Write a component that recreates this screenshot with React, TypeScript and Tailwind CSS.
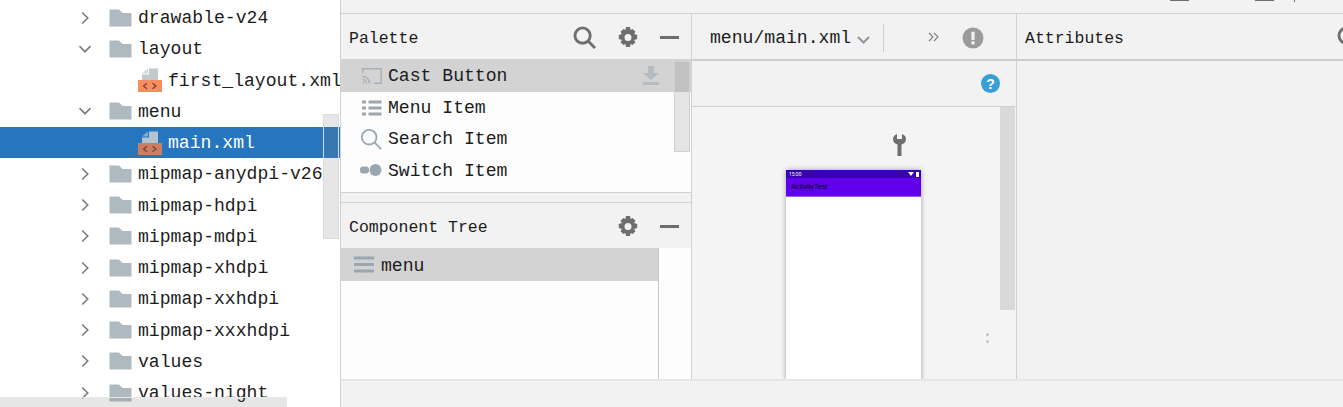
import type { ReactNode } from "react";

type TreeRow = {
  label: string;
  kind: "closed" | "open" | "file";
  selected?: boolean;
};

const treeRows: TreeRow[] = [
  { label: "drawable-v24", kind: "closed" },
  { label: "layout", kind: "open" },
  { label: "first_layout.xml", kind: "file" },
  { label: "menu", kind: "open" },
  { label: "main.xml", kind: "file", selected: true },
  { label: "mipmap-anydpi-v26", kind: "closed" },
  { label: "mipmap-hdpi", kind: "closed" },
  { label: "mipmap-mdpi", kind: "closed" },
  { label: "mipmap-xhdpi", kind: "closed" },
  { label: "mipmap-xxhdpi", kind: "closed" },
  { label: "mipmap-xxxhdpi", kind: "closed" },
  { label: "values", kind: "closed" },
  { label: "values-night", kind: "closed" },
];

function Chevron({ open }: { open: boolean }) {
  return (
    <svg width="14" height="14" viewBox="0 0 14 14" fill="none" stroke="#7f7f7f" strokeWidth="1.7">
      {open ? <path d="M1.5 4.2 7 9.7l5.5-5.5" /> : <path d="M4.2 1.5 9.7 7l-5.5 5.5" />}
    </svg>
  );
}

function Folder() {
  return (
    <svg width="23" height="18" viewBox="0 0 23 18" fill="#aeb9c0">
      <path d="M0.5 0.5h9.5l3.5 3.5h9v13.5h-22z" />
    </svg>
  );
}

function XmlFile({ selected }: { selected?: boolean }) {
  const grey = selected ? "#b4c3d2" : "#c2c8cc";
  return (
    <svg width="24" height="24" viewBox="0 0 24 24">
      <path d="M11 0.500h9v11.500H4V6.500h7z" fill={grey} />
      <path d="M4 5.500 10 0.500v5z" fill={grey} opacity="0.7" />
      <rect x="0" y="12" width="24" height="12" fill={selected ? "#cc7d62" : "#f78d5f"} />
      <path d="M9 15.200 5.500 18 9 20.800M14.500 15.200 18 18l-3.500 2.800" fill="none" stroke="#6d4437" strokeWidth="1.200" />
    </svg>
  );
}

function SearchIcon({ size = 23, color = "#6e6e6e", width = 3 }: { size?: number; color?: string; width?: number }) {
  return (
    <svg width={size} height={size} viewBox="0 0 24 24" fill="none" stroke={color} strokeWidth={width}>
      <circle cx="10" cy="10" r="8" />
      <path d="m15.5 15.5 7.5 7.5" />
    </svg>
  );
}

function GearIcon() {
  return (
    <svg width="20" height="21" viewBox="0 0 20 21" fill="#6e6e6e" fillRule="evenodd">
      <path d="M8 0h4l.6 3 2-.9 2.9 2.6-1.4 2.3 3.1.9v4.200l-3.100.9 1.400 2.300-2.900 2.600-2-.9-.6 3H8l-.6-3-2 .9-2.900-2.600 1.400-2.300L.8 12.100V7.900l3.100-.9-1.400-2.300 2.900-2.600 2 .9z M10 7a3.500 3.500 0 1 0 0 7 3.500 3.500 0 0 0 0-7z" />
    </svg>
  );
}

function Minus() {
  return <span className="block h-[3px] w-[19px] bg-[#6e6e6e]" />;
}

function CastIcon() {
  return (
    <svg width="20" height="16" viewBox="0 0 20 16" fill="none" stroke="#a6b1ba" strokeWidth="1.5">
      <path d="M0.8 5V0.8h18.400v14.400H12" />
      <path d="M0.500 8.500a7 7 0 0 1 7 7M0.500 11.500a4 4 0 0 1 4 4" />
      <circle cx="1.500" cy="14.500" r="1" fill="#a6b1ba" stroke="none" />
    </svg>
  );
}

function ListIcon() {
  return (
    <svg width="20" height="16" viewBox="0 0 20 16" fill="#9aa7b0">
      <rect x="0" y="0.500" width="4" height="3" />
      <rect x="6.500" y="0.500" width="13" height="3" />
      <rect x="0" y="6.500" width="4" height="3" />
      <rect x="6.500" y="6.500" width="13" height="3" />
      <rect x="0" y="12.500" width="4" height="3" />
      <rect x="6.500" y="12.500" width="13" height="3" />
    </svg>
  );
}

function SwitchIcon() {
  return (
    <svg width="22" height="14" viewBox="0 0 22 14" fill="#9aa7b0">
      <rect x="0" y="3.500" width="9" height="7" rx="3" />
      <circle cx="15.500" cy="7" r="6" />
    </svg>
  );
}

function PanelHeader({ title, children }: { title: string; children?: ReactNode }) {
  return (
    <div className="flex h-[45px] shrink-0 items-center justify-between bg-[#f2f2f2] pl-2 pt-[2px] text-[16.5px] text-[#1c1c1c]">
      <span className="pt-[3px]">{title}</span>
      {children}
    </div>
  );
}

function PaletteRow({ icon, label, selected }: { icon: ReactNode; label: string; selected?: boolean }) {
  return (
    <div className={`flex items-center text-[18.100px] text-[#1c1c1c] ${selected ? "h-[33px] bg-[#d3d3d3]" : "h-[31.300px]"}`}>
      <span className="flex w-[47px] shrink-0 items-center justify-end pr-[6px]">{icon}</span>
      <span className="pt-[2px]">{label}</span>
    </div>
  );
}

function ProjectTree() {
  return (
    <div className="relative h-[407px] w-[340px] shrink-0 overflow-hidden bg-white pt-[2px] text-[18.100px] text-[#1c1c1c]">
      {treeRows.map((row) => (
        <div
          key={row.label}
          className={`flex h-[31.250px] items-center whitespace-nowrap ${row.selected ? "bg-[#2675bf] text-white" : ""}`}
        >
          {row.kind === "file" ? (
            <span className="flex items-center gap-[6px] pl-[138px]">
              <XmlFile selected={row.selected} />
              <span className="pt-[2px]">{row.label}</span>
            </span>
          ) : (
            <span className="flex items-center pl-[78px]">
              <Chevron open={row.kind === "open"} />
              <span className="ml-[17px] mr-[6px]">
                <Folder />
              </span>
              <span className="pt-[2px]">{row.label}</span>
            </span>
          )}
        </div>
      ))}
      <div className="absolute left-[323px] top-[114px] h-[125px] w-[16px] border border-[#dcdcdc] bg-[#828282]/20" />
      <div className="absolute bottom-0 left-0 h-[10px] w-[287px] border-r border-t border-[#e8e8e8] bg-[#828282]/20" />
    </div>
  );
}

function PalettePanel() {
  return (
    <div className="flex w-[351px] shrink-0 flex-col border-r border-[#d1d1d1]">
      <PanelHeader title="Palette">
        <span className="flex items-center pr-[12px]">
          <SearchIcon />
          <span className="ml-[22px] mr-[22px]">
            <GearIcon />
          </span>
          <Minus />
        </span>
      </PanelHeader>
      <div className="relative h-[134px] shrink-0 border-b border-[#d1d1d1] bg-[#fdfdfd]">
        <PaletteRow icon={<CastIcon />} label="Cast Button" selected />
        <PaletteRow icon={<ListIcon />} label="Menu Item" />
        <PaletteRow icon={<SearchIcon size={22} color="#9aa7b0" width={2} />} label="Search Item" />
        <PaletteRow icon={<SwitchIcon />} label="Switch Item" />
        <svg className="absolute left-[301px] top-[7px]" width="18" height="20" viewBox="0 0 18 20" fill="#b4bcc2">
          <path d="M6 0h6v7h5l-8 7-8-7h5zM1 16h16v3H1z" />
        </svg>
        <div className="absolute left-[333px] top-[2px] h-[91px] w-[16px] border border-[#d0d0d0] bg-[#828282]/20" />
      </div>
      <div className="h-[10px] shrink-0 border-b border-[#d1d1d1] bg-[#f2f2f2]" />
      <PanelHeader title="Component Tree">
        <span className="flex items-center pr-[12px]">
          <span className="mr-[22px]">
            <GearIcon />
          </span>
          <Minus />
        </span>
      </PanelHeader>
      <div className="flex min-h-0 flex-1 bg-[#fdfdfd]">
        <div className="w-[318px] shrink-0 border-r border-[#c8c8c8]">
          <div className="flex h-[32.500px] items-center bg-[#d3d3d3] pl-[13px] text-[18.100px] text-[#1c1c1c]">
            <svg width="20" height="17" viewBox="0 0 20 17" fill="#9aa7b0">
              <rect width="20" height="3" y="0.500" />
              <rect width="20" height="3" y="7" />
              <rect width="20" height="3" y="13.500" />
            </svg>
            <span className="ml-[7px] pt-[5px]">menu</span>
          </div>
        </div>
      </div>
    </div>
  );
}

function Phone() {
  return (
    <div className="h-[300px] w-[135px] shrink-0 bg-white shadow-[0_0_5px_rgba(0,0,0,0.35)]">
      <div className="flex h-[8px] items-center justify-between bg-[#3700b3] pl-[3px] pr-[2px] font-['Roboto',sans-serif] text-[5px] leading-none text-white">
        <span>15:00</span>
        <span className="flex items-center gap-[2px]">
          <span className="h-0 w-0 border-x-[3px] border-t-[4px] border-x-transparent border-t-white" />
          <span className="h-[5px] w-[3px] bg-white" />
        </span>
      </div>
      <div className="flex h-[19px] items-center border-b border-[#9a5ce8] bg-[#6200ee] pl-[5px] font-['Roboto',sans-serif] text-[7px] text-black">
        ActivityTest
      </div>
    </div>
  );
}

function DesignPanel() {
  return (
    <div className="flex w-[325px] shrink-0 flex-col border-r border-[#d1d1d1]">
      <div className="flex h-[45px] shrink-0 items-center bg-[#f2f2f2] pl-[18px] pt-[2px] text-[18.100px] text-[#1c1c1c]">
        <span className="pt-[2px]">menu/main.xml</span>
        <svg className="ml-[6px] mt-[4px]" width="13" height="8" viewBox="0 0 13 8" fill="none" stroke="#8c979e" strokeWidth="2">
          <path d="m1 1 5.500 5.500L12 1" />
        </svg>
        <span className="ml-[13px] h-[28px] w-px bg-[#cfcfcf]" />
        <svg className="ml-[44px] mb-[2px]" width="11" height="10" viewBox="0 0 11 10" fill="none" stroke="#7f7f7f" strokeWidth="1.100">
          <path d="m1 1 4 4-4 4M6 1l4 4-4 4" />
        </svg>
        <svg className="ml-[23px]" width="22" height="22" viewBox="0 0 23 23">
          <circle cx="11.500" cy="11.500" r="11" fill="#9b9b9b" />
          <rect x="9.800" y="5" width="3.400" height="8.500" fill="#f2f2f2" />
          <rect x="9.800" y="15" width="3.400" height="3.200" fill="#f2f2f2" />
        </svg>
      </div>
      <div className="flex h-[48px] shrink-0 items-center justify-end border-t-2 border-b border-t-[#cdcdcd] border-b-[#d1d1d1] bg-[#f2f2f2] pr-[16px]">
        <span className="flex h-[19px] w-[19px] items-center justify-center rounded-full bg-[#389fd6] font-['Liberation_Sans',sans-serif] text-[14px] font-bold leading-none text-white">
          ?
        </span>
      </div>
      <div className="relative flex min-h-0 flex-1 overflow-hidden bg-[#f4f4f4]">
        <div className="flex w-[308px] shrink-0 flex-col pl-[94px] pt-[27px]">
          <svg className="ml-[107px] shrink-0" width="13" height="22" viewBox="0 0 13 22" fill="#6e6e6e">
            <path d="M4 0v5h5V0c3 1 4 3 4 5 0 3-2 5-4.500 5.500V22h-4V10.500C2 10 0 8 0 5c0-2 1-4 4-5z" />
          </svg>
          <div className="mt-[14px]">
            <Phone />
          </div>
        </div>
        <div className="h-[203px] w-[15px] bg-[#d9d9d9]" />
        <div className="absolute left-[294px] top-[226px] flex flex-col gap-[4px]">
          <span className="h-[3px] w-[3px] rounded-full bg-[#c4c4c4]" />
          <span className="h-[3px] w-[3px] rounded-full bg-[#c4c4c4]" />
        </div>
      </div>
    </div>
  );
}

function AttributesPanel() {
  return (
    <div className="flex min-w-0 flex-1 flex-col overflow-hidden bg-[#f2f2f2]">
      <div className="flex h-[47px] shrink-0 items-start overflow-hidden border-b-2 border-[#cdcdcd]">
        <div className="flex h-[45px] flex-1 items-center justify-between pl-2 pt-[2px] text-[16.500px] text-[#1c1c1c]">
          <span className="pt-[3px]">Attributes</span>
          <span className="mr-[-17px]">
            <SearchIcon />
          </span>
        </div>
      </div>
    </div>
  );
}

export default function App() {
  return (
    <div className="flex h-[407px] w-[1343px] overflow-hidden bg-white font-['Liberation_Mono',monospace]">
      <ProjectTree />
      <div className="flex min-w-0 flex-1 flex-col border-l border-[#d1d1d1] bg-[#f2f2f2]">
        <div className="relative h-[14px] shrink-0 border-b border-[#d1d1d1]">
          <span className="absolute left-[829px] top-0 h-px w-[19px] bg-[#6e6e6e]" />
          <span className="absolute left-[914px] top-0 h-px w-[19px] bg-[#6e6e6e]" />
          <span className="absolute left-[953px] top-0 h-[2px] w-px bg-[#6e6e6e]" />
        </div>
        <div className="flex h-[365px] shrink-0">
          <PalettePanel />
          <DesignPanel />
          <AttributesPanel />
        </div>
        <div className="min-h-0 flex-1 border-t-2 border-[#e6e6e6] bg-[#f2f2f2]" />
      </div>
    </div>
  );
}
